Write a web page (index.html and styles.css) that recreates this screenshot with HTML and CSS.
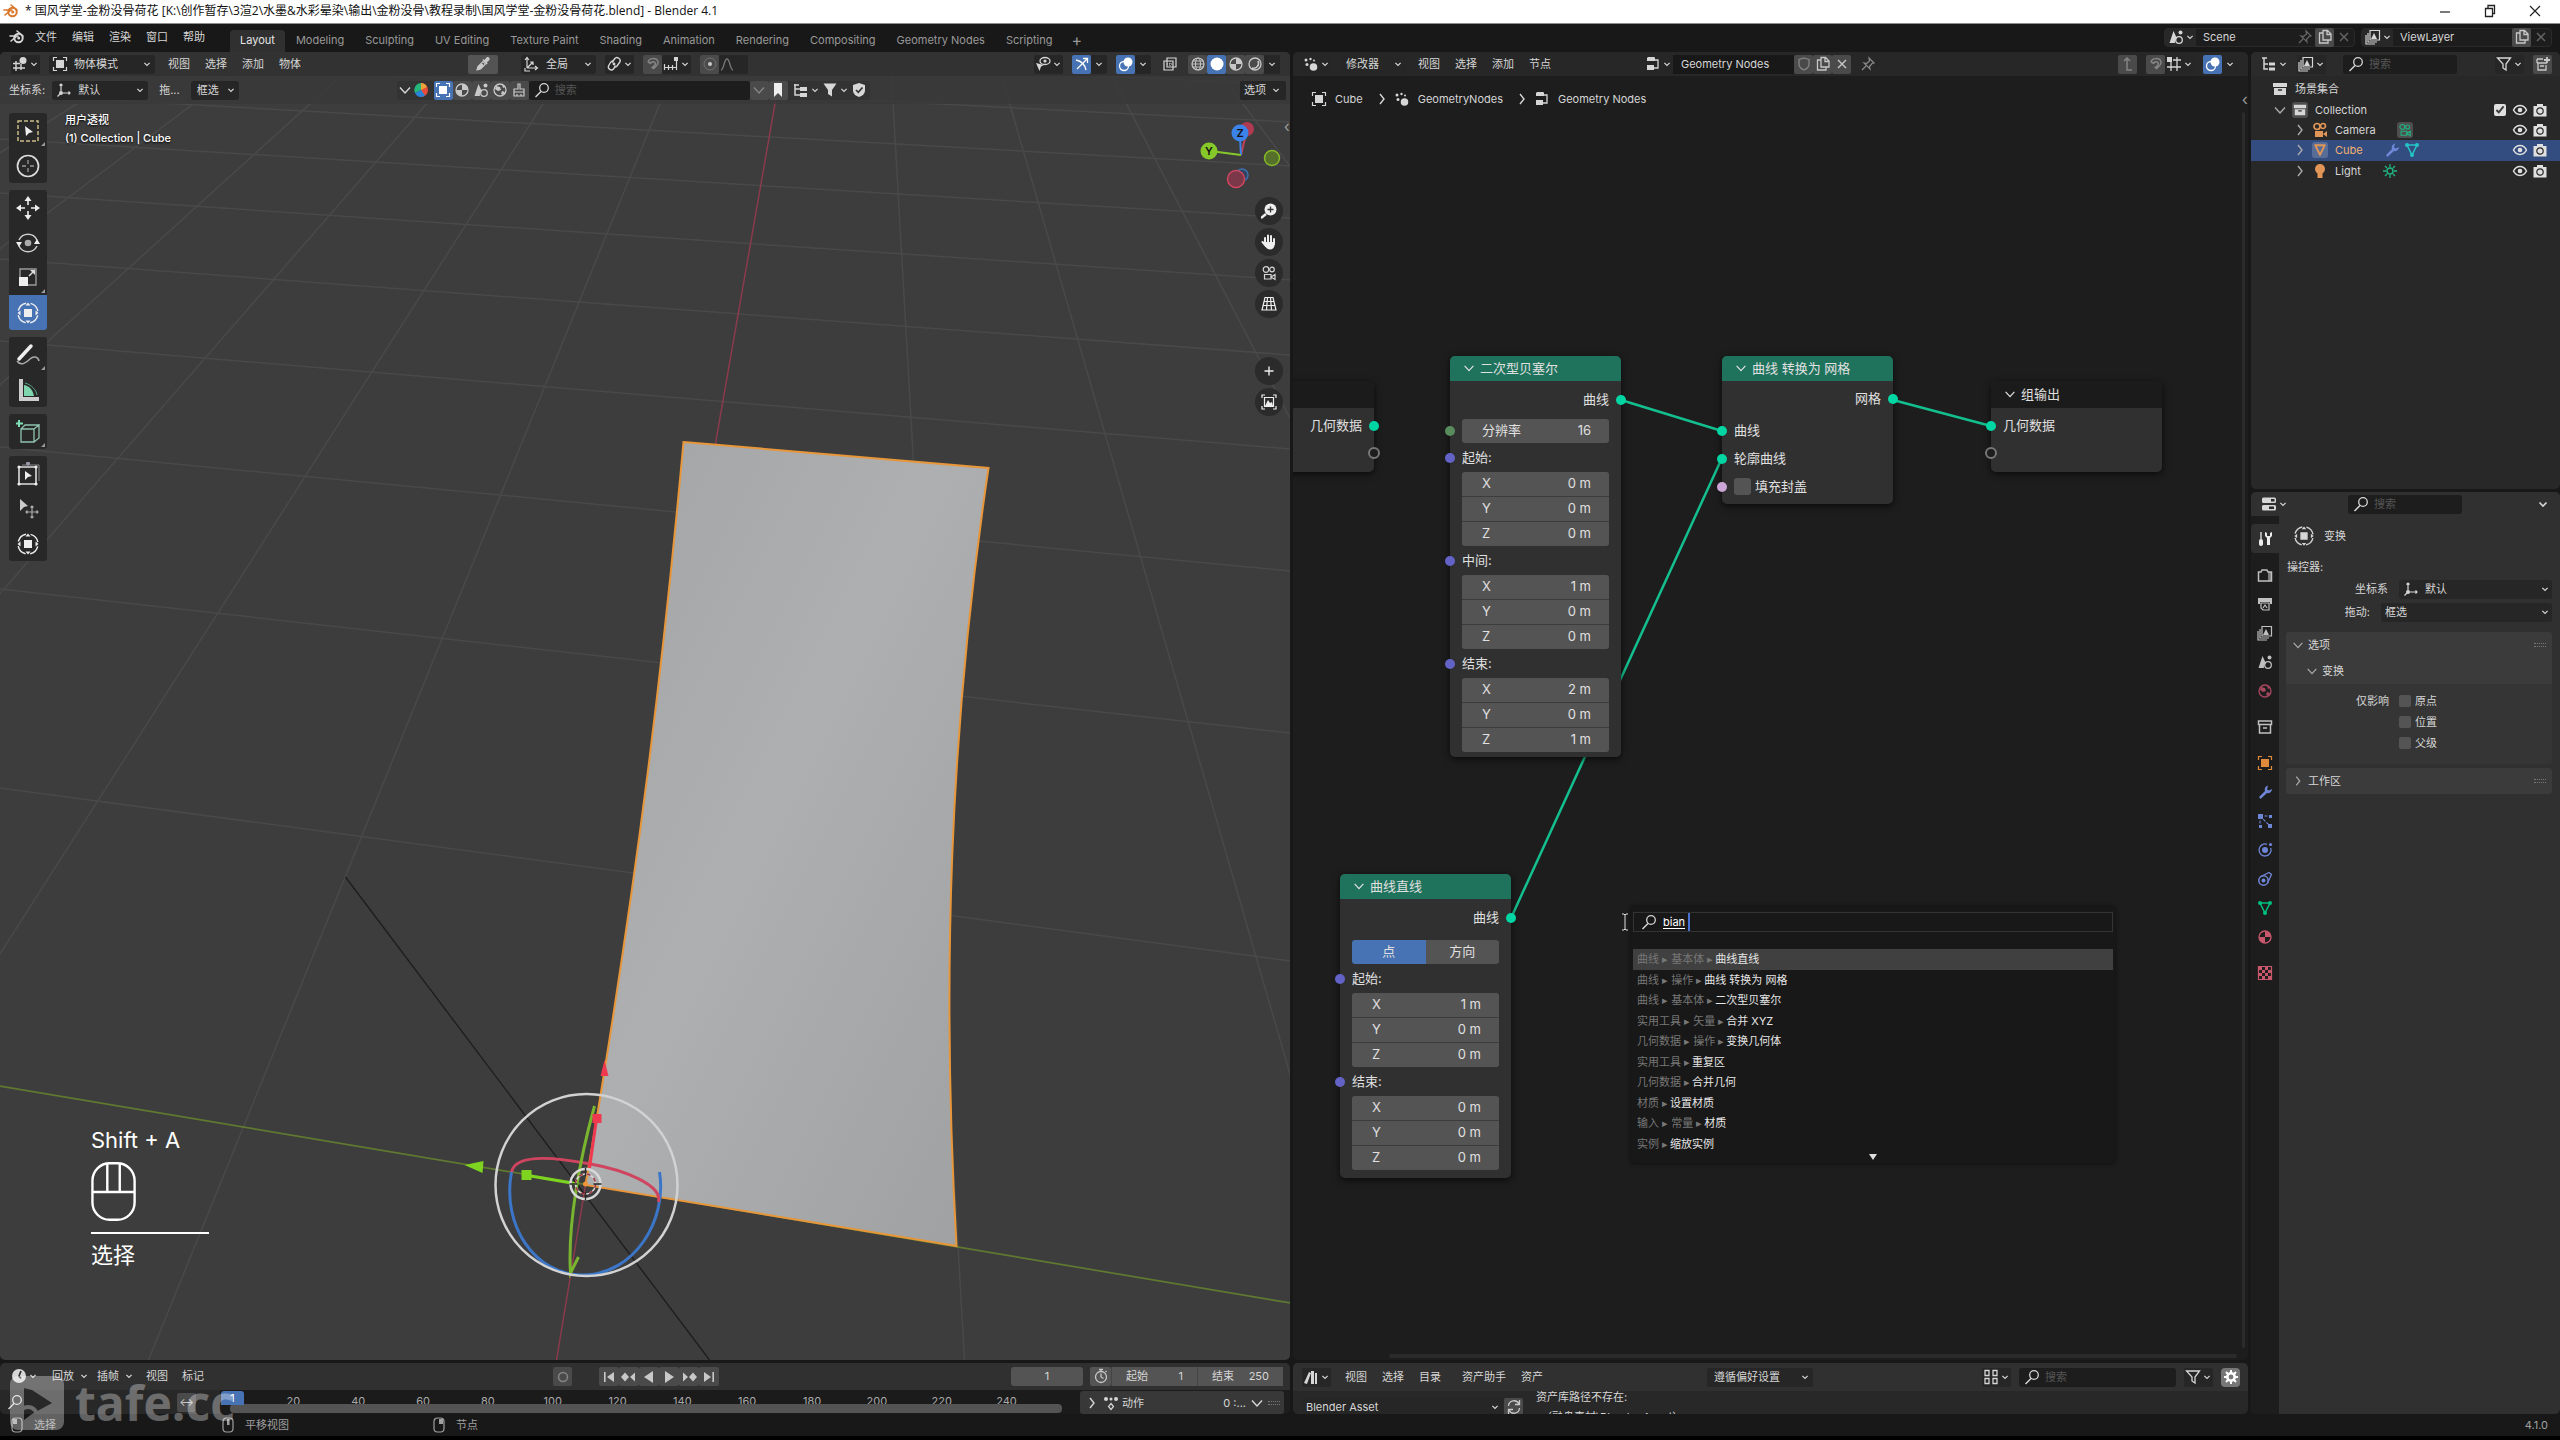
FILE: index.html
```html
<!DOCTYPE html>
<html lang="zh-CN">
<head>
<meta charset="utf-8">
<title>国风学堂-金粉没骨荷花.blend - Blender 4.1</title>
<link rel="stylesheet" href="styles.css">
</head>
<body>
<svg class="sprite" aria-hidden="true">
  <symbol id="chev" viewBox="0 0 16 16"><path d="M4.500 6.500 8 10l3.500-3.500" fill="none" stroke="currentColor" stroke-width="1.600"/></symbol>
  <symbol id="chev-r" viewBox="0 0 16 16"><path d="M6 3l4 5-4 5" fill="none" stroke="currentColor" stroke-width="1.400"/></symbol>
  <symbol id="chev-d" viewBox="0 0 16 16"><path d="M3 5.500 8 11l5-5.500" fill="none" stroke="currentColor" stroke-width="1.400"/></symbol>
  <symbol id="blender" viewBox="0 0 16 16"><path d="M8 2l6 5M1 7h8M2 12l6-5" fill="none" stroke="currentColor" stroke-width="1.600" stroke-linecap="round"/><circle cx="9.500" cy="9" r="4.200" fill="none" stroke="currentColor" stroke-width="2"/><circle cx="9.700" cy="9" r="1.500" fill="currentColor"/></symbol>
  <symbol id="view3d" viewBox="0 0 16 16"><path d="M4 5v10M9 8v6M1 7.500h7M1 12h12" fill="none" stroke="currentColor" stroke-width="1.400"/><circle cx="11" cy="4.500" r="3.500" fill="currentColor"/></symbol>
  <symbol id="object" viewBox="0 0 16 16"><path d="M1.500 5V1.500H5M11 1.500h3.500V5M14.500 11v3.500H11M5 14.500H1.500V11" fill="none" stroke="currentColor" stroke-width="1.200"/><path d="M4 4h8v8H4z" fill="currentColor"/></symbol>
  <symbol id="dropper" viewBox="0 0 16 16"><path d="M2 14l1-3.500L8 5.500l2.500 2.500-5 5z" fill="none" stroke="currentColor" stroke-width="1.200"/><path d="M2 14l1-3.500L6.500 7 9 9.500 5.500 13zM7.500 4l1-1 1 1 2-2.500c2-1.300 4 .7 2.800 2.700L11.700 6.500l1 1-1 1z" fill="currentColor"/></symbol>
  <symbol id="axes" viewBox="0 0 16 16"><path d="M3 12V2M1 4l2-2.500L5 4M3 12h10M11 10l2.500 2L11 14M3 12l6-6M9 9V6H6M6 15H1v-3" fill="none" stroke="currentColor" stroke-width="1.200"/></symbol>
  <symbol id="axes-s" viewBox="0 0 16 16"><path d="M5 9V2M3.500 3.500 5 2l1.500 1.500M7 11h7M12.500 9.500 14 11l-1.500 1.500M1.500 14.500 4 12" fill="none" stroke="currentColor" stroke-width="1.200"/><circle cx="5" cy="11" r="2" fill="currentColor"/></symbol>
  <symbol id="pivot" viewBox="0 0 16 16"><path d="M6 6.500 8.500 3a3 3 0 0 1 5 3.500L11 10a3 3 0 0 1-3 1" fill="none" stroke="currentColor" stroke-width="1.400"/><path d="M9.500 9.500 7.500 13a3 3 0 0 1-5-3L4.500 6.500a3 3 0 0 1 3-1.500" fill="none" stroke="currentColor" stroke-width="1.400"/><circle cx="8" cy="8" r="1.400" fill="currentColor"/></symbol>
  <symbol id="magnet" viewBox="0 0 16 16"><path d="M3 6c1-4 9-5 10 0 .6 3-3 5-5 7M5.500 8c.5-3 4.500-3 5 0-.5 2-2.500 3-4 4M3 6l3 1.500" fill="none" stroke="currentColor" stroke-width="1.500"/></symbol>
  <symbol id="snapinc" viewBox="0 0 16 16"><path d="M1.500 8v6M5.500 9v5M9.500 9v5M13.500 5v9M1.500 11.500h12" fill="none" stroke="currentColor" stroke-width="1.200"/><path d="M11 1h4v4h-4z" fill="currentColor"/></symbol>
  <symbol id="dot" viewBox="0 0 16 16"><circle cx="8" cy="8" r="2" fill="currentColor"/><circle cx="8" cy="8" r="6" fill="none" stroke="currentColor" opacity=".3"/></symbol>
  <symbol id="falloff" viewBox="0 0 16 16"><path d="M2 14c3 0 3-11 6-11s3 11 6 11" fill="none" stroke="currentColor" stroke-width="1.300"/></symbol>
  <symbol id="ball" viewBox="0 0 16 16"><path d="M8 1a7 7 0 0 1 0 14z" fill="#e84b3a"/><path d="M8 1a7 7 0 0 0-6 10l6-3z" fill="#25b67a"/><path d="M8 8l-6 3a7 7 0 0 0 6 4 7 7 0 0 0 4-1.500z" fill="#2b83d8"/><path d="M8 1c3 0 5 2 6 4L8 8z" fill="#e8a33a"/></symbol>
  <symbol id="material" viewBox="0 0 16 16"><circle cx="8" cy="8" r="6" fill="none" stroke="currentColor" stroke-width="1.300"/><path d="M8 2a6 6 0 0 1 6 6H8zM8 8v6a6 6 0 0 1-6-6z" fill="currentColor"/></symbol>
  <symbol id="scene" viewBox="0 0 16 16"><path d="M5.500 2 9 9.500A4 4 0 0 0 7 14H1.500z" fill="currentColor"/><circle cx="11" cy="11" r="3.300" fill="none" stroke="currentColor" stroke-width="1.300"/><circle cx="12.500" cy="3.500" r="2" fill="currentColor"/></symbol>
  <symbol id="world" viewBox="0 0 16 16"><circle cx="8" cy="8" r="6" fill="none" stroke="currentColor" stroke-width="1.300"/><path d="M4 4l4 1 1 3-3 1-3-2zM10 9l3 1-2 3-2-1zM10 2l3 3-2 1z" fill="currentColor"/></symbol>
  <symbol id="brush" viewBox="0 0 16 16"><path d="M7 2h2v5h4v3H3V7h4zM3 10v4h10v-4M6 14v-2M10 14v-2" fill="none" stroke="currentColor" stroke-width="1.200"/></symbol>
  <symbol id="search" viewBox="0 0 16 16"><circle cx="10" cy="6" r="4.300" fill="none" stroke="currentColor" stroke-width="1.300"/><path d="M7 9.500 1.500 15" stroke="currentColor" stroke-width="1.500"/></symbol>
  <symbol id="bookmark" viewBox="0 0 16 16"><path d="M4 1h8v14l-4-4-4 4z" fill="currentColor"/></symbol>
  <symbol id="tree" viewBox="0 0 16 16"><path d="M2 2v11h5M2 7h5M1 3h5" fill="none" stroke="currentColor" stroke-width="1.500"/><path d="M7 5h7v4H7zM7 11h7v4H7z" fill="currentColor"/></symbol>
  <symbol id="funnel" viewBox="0 0 16 16"><path d="M1.500 1.500h13L10 8v6.500L6 12V8z" fill="currentColor"/></symbol>
  <symbol id="funnel-o" viewBox="0 0 16 16"><path d="M1.500 2h13L10 8v6l-3-2V8z" fill="none" stroke="currentColor" stroke-width="1.300"/></symbol>
  <symbol id="shield-f" viewBox="0 0 16 16"><path d="M8 1l6 2v5c0 4-3 6-6 7-3-1-6-3-6-7V3z" fill="currentColor"/><path d="M5 8l2.300 2.300L11.500 5.500" fill="none" stroke="#333" stroke-width="1.700"/></symbol>
  <symbol id="shield" viewBox="0 0 16 16"><path d="M8 2l5 1.500V8c0 3-2.500 5-5 6-2.500-1-5-3-5-6V3.500z" fill="none" stroke="currentColor" stroke-width="1.300"/></symbol>
  <symbol id="vis" viewBox="0 0 16 16"><path d="M1 7l8 2-3 1.500L4.500 15z" fill="currentColor"/><ellipse cx="10" cy="5" rx="5" ry="3.500" fill="none" stroke="currentColor" stroke-width="1.300"/><circle cx="10" cy="5" r="1.600" fill="currentColor"/></symbol>
  <symbol id="gizmo" viewBox="0 0 16 16"><path d="M3 13 13 3M9 2.500h4.500V7M2 4c5 1 9 5 10 10" fill="none" stroke="currentColor" stroke-width="1.300"/></symbol>
  <symbol id="overlay" viewBox="0 0 16 16"><circle cx="10" cy="6" r="4.500" fill="currentColor"/><circle cx="6" cy="10" r="4.500" fill="none" stroke="currentColor" stroke-width="1.300"/></symbol>
  <symbol id="xray" viewBox="0 0 16 16"><path d="M5 2h9v9H5zM2 5h9v9H2z" fill="none" stroke="currentColor" stroke-width="1.200"/><path d="M8 5v6M5 8h6" stroke="currentColor" stroke-dasharray="1 1"/></symbol>
  <symbol id="wire" viewBox="0 0 16 16"><circle cx="8" cy="8" r="6" fill="none" stroke="currentColor" stroke-width="1.200"/><ellipse cx="8" cy="8" rx="2.500" ry="6" fill="none" stroke="currentColor"/><path d="M2 8h12M3 5h10M3 11h10" stroke="currentColor" stroke-width=".9"/></symbol>
  <symbol id="solid" viewBox="0 0 16 16"><circle cx="8" cy="8" r="6.500" fill="currentColor"/></symbol>
  <symbol id="rendered" viewBox="0 0 16 16"><circle cx="8" cy="8" r="6" fill="none" stroke="currentColor" stroke-width="1.300"/><path d="M11 5a5 5 0 0 1-6 7" fill="none" stroke="currentColor" stroke-width="1.600"/></symbol>
  <symbol id="geonodes" viewBox="0 0 16 16"><circle cx="10.500" cy="11" r="3.800" fill="currentColor"/><circle cx="3" cy="4" r="1.500" fill="currentColor"/><circle cx="7.500" cy="3" r="1.200" fill="currentColor"/><circle cx="4" cy="8.500" r="1.500" fill="currentColor"/><circle cx="11" cy="4.500" r="1" fill="currentColor"/></symbol>
  <symbol id="nodetree" viewBox="0 0 16 16"><path d="M3 1h6a1 1 0 0 1 1 1v3H2V2zM2 9h7v5H2z" fill="currentColor"/><path d="M10 4h3v8H9" fill="none" stroke="currentColor" stroke-width="1.300"/></symbol>
  <symbol id="copy" viewBox="0 0 16 16"><path d="M6 1.500h4.500L14 5v6H6zM10 2v3.500h4M6 4H2.500v10H11v-3" fill="none" stroke="currentColor" stroke-width="1.300"/></symbol>
  <symbol id="x" viewBox="0 0 16 16"><path d="M4 4l8 8M12 4l-8 8" stroke="currentColor" stroke-width="1.400"/></symbol>
  <symbol id="pin" viewBox="0 0 16 16"><path d="M9 2l5 5-2 .5-2.500 3 .5 2.500-6-6 2.500.5 3-2.500zM6 10l-4 4" fill="none" stroke="currentColor" stroke-width="1.200"/></symbol>
  <symbol id="up" viewBox="0 0 16 16"><path d="M4 5l3-3 3 3M7 2v12h5" fill="none" stroke="currentColor" stroke-width="1.500"/></symbol>
  <symbol id="snapgrid" viewBox="0 0 16 16"><path d="M5 6v9M11 1v14M7 4h8M1 11h14" fill="none" stroke="currentColor" stroke-width="1.300"/><path d="M1 1h5v5H1z" fill="currentColor"/></symbol>
  <symbol id="images" viewBox="0 0 16 16"><path d="M5 1.500h9.500v9.500H5zM3 4v9h9M1 6v9h9" fill="none" stroke="currentColor" stroke-width="1.200"/><path d="M6 10l3-6 3 6z" fill="currentColor"/></symbol>
  <symbol id="outliner" viewBox="0 0 16 16"><path d="M3 2v11h4M3 8h4M1 2h5" fill="none" stroke="currentColor" stroke-width="1.500"/><path d="M8 6.500h6v3H8zM8 11.500h6v3H8z" fill="currentColor"/></symbol>
  <symbol id="newcol" viewBox="0 0 16 16"><path d="M2 3h6M2 7h10M3 7v7h8V9M2 3v4M5 10h4" fill="none" stroke="currentColor" stroke-width="1.300"/><path d="M12 1v6M9 4h6" stroke="currentColor" stroke-width="1.800"/></symbol>
  <symbol id="box" viewBox="0 0 16 16"><path d="M1 2h14v4H1zM2 7h12v7H2z" fill="currentColor"/><path d="M6 9h4" stroke="#282828" stroke-width="1.600"/></symbol>
  <symbol id="box-o" viewBox="0 0 16 16"><path d="M1.500 2h13v3.500h-13zM2.500 5.500V14h11V5.500M6 9h4" fill="none" stroke="currentColor" stroke-width="1.500"/></symbol>
  <symbol id="cam" viewBox="0 0 16 16"><circle cx="5" cy="4.500" r="3" fill="none" stroke="currentColor" stroke-width="1.700"/><circle cx="11" cy="4" r="2.500" fill="none" stroke="currentColor" stroke-width="1.700"/><path d="M3 9h8v6H3zM11 12l4-3v6z" fill="currentColor"/></symbol>
  <symbol id="cam-d" viewBox="0 0 16 16"><circle cx="5" cy="4.500" r="2.800" fill="none" stroke="currentColor" stroke-width="1.200"/><circle cx="11" cy="4.500" r="2.300" fill="none" stroke="currentColor" stroke-width="1.200"/><path d="M3.500 9.500h6.500v4.500H3.500zM10 12l4-2.500v5z" fill="none" stroke="currentColor" stroke-width="1.200"/></symbol>
  <symbol id="mesh" viewBox="0 0 16 16"><path d="M3 3h10L8 13z" fill="none" stroke="currentColor" stroke-width="1.500"/><circle cx="3" cy="3" r="2" fill="currentColor"/><circle cx="13" cy="3" r="2" fill="currentColor"/><circle cx="8" cy="13" r="2" fill="currentColor"/></symbol>
  <symbol id="tri" viewBox="0 0 16 16"><path d="M2.500 2.500h11L8 13.500z" fill="none" stroke="currentColor" stroke-width="2.200" stroke-linejoin="round"/></symbol>
  <symbol id="wrench" viewBox="0 0 16 16"><path d="M11 1.500a4 4 0 0 0-3 5.500L2 13l1.500 2L10 9a4 4 0 0 0 5-4l-3 1.500-2-1z" fill="currentColor"/></symbol>
  <symbol id="bulb" viewBox="0 0 16 16"><circle cx="8" cy="6" r="5" fill="currentColor"/><path d="M5.500 10h5v5h-5z" fill="currentColor"/></symbol>
  <symbol id="sun" viewBox="0 0 16 16"><circle cx="8" cy="8" r="3" fill="none" stroke="currentColor" stroke-width="1.500"/><path d="M8 1v3M8 12v3M1 8h3M12 8h3M3 3l2 2M11 11l2 2M13 3l-2 2M5 11l-2 2" stroke="currentColor" stroke-width="1.300"/></symbol>
  <symbol id="eye" viewBox="0 0 16 16"><path d="M1.500 8c3-6 10-6 13 0-3 6-10 6-13 0z" fill="none" stroke="currentColor" stroke-width="1.500"/><circle cx="8" cy="8" r="2.300" fill="currentColor"/></symbol>
  <symbol id="photo" viewBox="0 0 16 16"><path d="M1.500 4H5V2h6v2h3.500v10.500h-13z" fill="currentColor"/><circle cx="8" cy="9" r="3.200" fill="none" stroke="#282828" stroke-width="1.200"/></symbol>
  <symbol id="props" viewBox="0 0 16 16"><rect x="1" y="1.500" width="14" height="5.500" rx="1.500" fill="currentColor"/><rect x="1" y="9" width="14" height="5.500" rx="1.500" fill="currentColor"/><path d="M10 3h3.500v2.500H10zM8 10.500h5V13H8z" fill="#282828"/></symbol>
  <symbol id="tool" viewBox="0 0 16 16"><path d="M4 1v7" stroke="currentColor" stroke-width="1.300"/><rect x="2" y="8" width="4" height="7" rx="2" fill="currentColor"/><path d="M8 1v4l2 2v7h3V7l2-2V1l-2 1v3h-3V2z" fill="currentColor"/></symbol>
  <symbol id="render" viewBox="0 0 16 16"><path d="M1.500 5H4l1-2h5l1 2h3.500v9h-13z" fill="none" stroke="currentColor" stroke-width="1.500"/><path d="M11 5h3v9h-3z" fill="currentColor" opacity=".6"/></symbol>
  <symbol id="printer" viewBox="0 0 16 16"><path d="M1 2h14v6h-2V6H3v2H1z" fill="currentColor"/><path d="M4 7h8v7H6l-2-2zM6 12l2-3 2 3" fill="none" stroke="currentColor" stroke-width="1.200"/></symbol>
  <symbol id="particles" viewBox="0 0 16 16"><path d="M3 3h10M3 3v11M3 3l10 10" stroke="currentColor" stroke-width="1.100" stroke-dasharray="3 1.500"/><path d="M1 1h5v5H1zM12 2h3v3h-3zM11 11h4v4h-4zM2 12h3v3H2z" fill="currentColor"/></symbol>
  <symbol id="physics" viewBox="0 0 16 16"><path d="M10 2.300A6 6 0 1 0 13.700 6" fill="none" stroke="currentColor" stroke-width="1.300"/><circle cx="8" cy="8" r="3" fill="currentColor"/><circle cx="13.500" cy="2.500" r="1.600" fill="currentColor"/></symbol>
  <symbol id="constraint" viewBox="0 0 16 16"><circle cx="6.500" cy="9.500" r="4.700" fill="none" stroke="currentColor" stroke-width="1.500"/><circle cx="6.500" cy="9.500" r="2" fill="currentColor"/><path d="M3 6l9-4.500 2.500 2L10.500 12" fill="none" stroke="currentColor" stroke-width="1.300"/></symbol>
  <symbol id="checker" viewBox="0 0 16 16"><path d="M1.500 1.500h13v13h-13z" fill="none" stroke="currentColor" stroke-width="1.200"/><path d="M2 2h3v3H2zM8 2h3v3H8zM5 5h3v3H5zM11 5h3v3h-3zM2 8h3v3H2zM8 8h3v3H8zM5 11h3v3H5zM11 11h3v3h-3z" fill="currentColor"/></symbol>
  <symbol id="transform" viewBox="0 0 24 24"><circle cx="12" cy="12" r="10" fill="none" stroke="currentColor" stroke-width="1.500" stroke-dasharray="11 4.700" stroke-dashoffset="-2.400"/><path d="M8 8h8v8H8zM9.500 4.500 12 1.500l2.500 3zM9.500 19.500l2.500 3 2.500-3zM4.500 9.500l-3 2.500 3 2.500zM19.500 9.500l3 2.500-3 2.500z" fill="currentColor"/></symbol>
  <symbol id="clock" viewBox="0 0 16 16"><circle cx="8" cy="8" r="7" fill="currentColor"/><path d="M10 3 8 8l2 2.500" fill="none" stroke="#303030" stroke-width="1.700"/></symbol>
  <symbol id="stopwatch" viewBox="0 0 16 16"><circle cx="8" cy="9" r="5.500" fill="none" stroke="currentColor" stroke-width="1.300"/><path d="M8 5.500V9l2.500 1.500M6 1.500h4M8 1.500V4M12.500 4l1-1" fill="none" stroke="currentColor" stroke-width="1.300"/></symbol>
  <symbol id="rec" viewBox="0 0 16 16"><circle cx="8" cy="8" r="4.500" fill="none" stroke="currentColor" stroke-width="1.500"/></symbol>
  <symbol id="first" viewBox="0 0 16 16"><path d="M3 3h1.600v10H3zM13 3v10L6 8z" fill="currentColor"/></symbol>
  <symbol id="prevkey" viewBox="0 0 16 16"><path d="M0 8l4-4.500L8 8l-4 4.500zM14 3.500v9L9 8z" fill="currentColor"/></symbol>
  <symbol id="play" viewBox="0 0 16 16"><path d="M4 2v12l9-6z" fill="currentColor"/></symbol>
  <symbol id="assets" viewBox="0 0 16 16"><path d="M1 14 6 3l2 1-4 11zM8 2h3v13H8zM12 4h2v11h-2z" fill="currentColor"/></symbol>
  <symbol id="display" viewBox="0 0 16 16"><path d="M2 1.500h4v5H2zM10 1.500h4v5h-4zM2 9.500h4v5H2zM10 9.500h4v5h-4z" fill="none" stroke="currentColor" stroke-width="1.300"/></symbol>
  <symbol id="gear" viewBox="0 0 16 16"><circle cx="8" cy="8" r="3.700" fill="none" stroke="currentColor" stroke-width="2.600"/><path d="M8 1v3M8 12v3M1 8h3M12 8h3M3 3l2 2M11 11l2 2M13 3l-2 2M5 11l-2 2" stroke="currentColor" stroke-width="2"/></symbol>
  <symbol id="refresh" viewBox="0 0 16 16"><path d="M2.500 7A5.500 5.500 0 0 1 13 5M13.500 1v4.500H9M13.500 9A5.500 5.500 0 0 1 3 11M2.500 15v-4.500H7" fill="none" stroke="currentColor" stroke-width="1.300"/></symbol>
  <symbol id="action" viewBox="0 0 16 16"><circle cx="3" cy="4" r="2" fill="currentColor"/><circle cx="8" cy="4" r="1.500" fill="currentColor"/><circle cx="13" cy="4" r="2" fill="currentColor"/><path d="M8 8.500l2.500 3L8 14.500l-2.500-3z" fill="none" stroke="currentColor" stroke-width="1.200"/></symbol>
  <symbol id="mouse-l" viewBox="0 0 16 16"><rect x="3" y="1" width="10" height="14" rx="3.500" fill="none" stroke="currentColor" stroke-width="1.200"/><path d="M4 2h4v5H4z" fill="currentColor"/></symbol>
  <symbol id="mouse-m" viewBox="0 0 16 16"><rect x="3" y="1" width="10" height="14" rx="3.500" fill="none" stroke="currentColor" stroke-width="1.200"/><path d="M7 2h2.500v6H7z" fill="currentColor"/></symbol>
  <symbol id="mouse-r" viewBox="0 0 16 16"><rect x="3" y="1" width="10" height="14" rx="3.500" fill="none" stroke="currentColor" stroke-width="1.200"/><path d="M8 2h4v5H8z" fill="currentColor"/></symbol>
</svg>

<header class="titlebar">
  <svg class="i logo"><use href="#blender"/></svg>
  <h1>* 国风学堂-金粉没骨荷花 [K:\创作暂存\3渲2\水墨&amp;水彩晕染\输出\金粉没骨\教程录制\国风学堂-金粉没骨荷花.blend] - Blender 4.1</h1>
  <div class="winbtns">
    <button aria-label="最小化"><svg class="i"><path d="M3 9h10" stroke="#222" stroke-width="1.200"/></svg></button>
    <button aria-label="还原"><svg class="i"><path d="M3.500 5.500h7v8h-7zM6 5V2.500h6.500v8H11" fill="none" stroke="#222" stroke-width="1.300"/></svg></button>
    <button aria-label="关闭"><svg class="i"><path d="M3 3l10 10M13 3 3 13" stroke="#222" stroke-width="1.200"/></svg></button>
  </div>
</header>

<nav class="topbar">
  <svg class="i"><use href="#blender"/></svg>
  <div class="menu"><button>文件</button><button>编辑</button><button>渲染</button><button>窗口</button><button>帮助</button></div>
  <div class="tabs"><button class="on">Layout</button><button>Modeling</button><button>Sculpting</button><button>UV Editing</button><button>Texture Paint</button><button>Shading</button><button>Animation</button><button>Rendering</button><button>Compositing</button><button>Geometry Nodes</button><button>Scripting</button><button class="add">+</button></div>
  <div class="idblock">
    <button class="pick"><svg class="i"><use href="#scene"/></svg><svg class="c"><use href="#chev"/></svg></button>
    <input value="Scene" aria-label="场景"><button class="ghost"><svg class="i"><use href="#pin"/></svg></button><button class="b grey"><svg class="i"><use href="#copy"/></svg></button><button class="ghost"><svg class="i"><use href="#x"/></svg></button>
  </div>
  <div class="idblock layer">
    <button class="pick"><svg class="i"><use href="#images"/></svg><svg class="c"><use href="#chev"/></svg></button>
    <input value="ViewLayer" aria-label="视图层"><button class="b grey"><svg class="i"><use href="#copy"/></svg></button><button class="ghost"><svg class="i"><use href="#x"/></svg></button>
  </div>
</nav>

<main class="workspace">
<section class="col">
  <div class="area viewport">
    <svg class="scene3d" viewBox="0 52 1291 1308" preserveAspectRatio="xMidYMid slice">
      <defs><linearGradient id="sheet" x1="0" y1="0" x2="1" y2="1"><stop offset="0" stop-color="#a2a4a5"/><stop offset=".45" stop-color="#adafb0"/><stop offset="1" stop-color="#9ea0a1"/></linearGradient></defs>
      <g stroke="#494949" stroke-width="1.500">
        <path d="M865-399-3115 1360M865-399-2707 1360M865-399-2299 1360M865-399-1891 1360M865-399-1483 1360M865-399-1075 1360M865-399-667 1360M865-399-259 1360M865-399 149 1360M865-399 965 1360M865-399 1373 1360M865-399 1781 1360M865-399 2189 1360M865-399 2597 1360M865-399 3005 1360M865-399 3413 1360M865-399 3821 1360"/>
        <path d="M0 788 1291 961M0 589 1291 733M0 447 1291 571M0 341 1291 449M0 259 1291 355M0 193 1291 280M0 139 1291 218M0 94 1291 166M0 56 1291 122M0 23 1291 85"/>
      </g>
      <path d="M776 101 586 1185 557 1360" stroke="#8a3b4b" stroke-width="1.500" fill="none"/>
      <path d="M0 1086 1291 1303" stroke="#5f7a30" stroke-width="1.700"/>
      <path d="M346 877 710 1360" stroke="#1d1d1d" stroke-width="1.300"/>
      <path d="M684 442 989 468C950 730 942 980 957 1246L586 1185C640 870 665 650 684 442z" fill="url(#sheet)" stroke="#e8963a" stroke-width="2"/>
      <g fill="none" stroke-width="3">
        <path d="M512 1172C502 1225 535 1275 583 1275C635 1275 668 1220 660 1172" stroke="#3b76c8"/>
        <path d="M512 1172C516 1152 560 1158 591 1164C625 1170 663 1185 659 1202" stroke="#cf4560"/>
        <path d="M595 1106C580 1160 568 1225 571 1273L579 1257" stroke="#79b52f"/>
        <path d="M531 1176 578 1184" stroke="#7ed321"/>
        <path d="M597 1119 590 1168" stroke="#f0384f"/>
        <circle cx="587" cy="1185" r="91" stroke="#d2d2d2" stroke-width="2.500"/>
        <circle cx="586" cy="1184" r="15" stroke="#d8d8d8" stroke-width="2.500"/>
        <circle cx="586" cy="1184" r="10" stroke="#d8d8d8" stroke-width="1.500"/>
        <circle cx="586" cy="1184" r="10" stroke="#a03040" stroke-width="1.500" stroke-dasharray="4 4"/>
        <path d="M586 1168v8M586 1192v8M570 1184h8M594 1184h8" stroke="#2a2a2a" stroke-width="1.300"/>
      </g>
      <path d="M465 1165 484 1161 483 1173zM522 1170h10v10h-10z" fill="#7ed321"/>
      <path d="M605 1060 609 1076H601zM593 1114h9v9h-9z" fill="#f0384f"/>
      <circle cx="586" cy="1184" r="2.500" fill="#f0963a"/>
    </svg>
    <div class="hrow solid">
      <button class="b dark ed"><svg class="i"><use href="#view3d"/></svg><svg class="c"><use href="#chev"/></svg></button>
      <label class="dd mode"><svg class="i"><use href="#object"/></svg><select aria-label="模式"><option>物体模式</option></select><svg class="c"><use href="#chev"/></svg></label>
      <div class="menu"><button>视图</button><button>选择</button><button>添加</button><button>物体</button></div>
      <div class="mid">
        <button class="b grey wide"><svg class="i"><use href="#dropper"/></svg></button>
        <label class="dd orient"><svg class="i"><use href="#axes"/></svg><select aria-label="坐标系"><option>全局</option></select><svg class="c"><use href="#chev"/></svg></label>
        <button class="b dark ed"><svg class="i"><use href="#pivot"/></svg><svg class="c"><use href="#chev"/></svg></button>
        <div class="join"><button class="b grey dim"><svg class="i"><use href="#magnet"/></svg></button><button class="b dark ed"><svg class="i"><use href="#snapinc"/></svg><svg class="c"><use href="#chev"/></svg></button></div>
        <div class="join"><button class="b grey"><svg class="i"><use href="#dot"/></svg></button><button class="b dark ed off"><svg class="i"><use href="#falloff"/></svg></button></div>
      </div>
      <div class="end">
        <button class="b dark ed"><svg class="i"><use href="#vis"/></svg><svg class="c"><use href="#chev"/></svg></button>
        <div class="join"><button class="b blue"><svg class="i"><use href="#gizmo"/></svg></button><button class="b dark"><svg class="c"><use href="#chev"/></svg></button></div>
        <div class="join"><button class="b blue"><svg class="i"><use href="#overlay"/></svg></button><button class="b dark"><svg class="c"><use href="#chev"/></svg></button></div>
        <button class="b"><svg class="i"><use href="#xray"/></svg></button>
        <div class="join"><button class="b grey"><svg class="i"><use href="#wire"/></svg></button><button class="b blue"><svg class="i"><use href="#solid"/></svg></button><button class="b grey"><svg class="i"><use href="#material"/></svg></button><button class="b grey"><svg class="i"><use href="#rendered"/></svg></button><button class="b dark"><svg class="c"><use href="#chev"/></svg></button></div>
      </div>
    </div>
    <div class="hrow tools">
      <label class="pair">坐标系:<span class="dd dflt"><svg class="i"><use href="#axes-s"/></svg><select><option>默认</option></select><svg class="c"><use href="#chev"/></svg></span></label>
      <label class="pair">拖...<span class="dd drag"><select><option>框选</option></select><svg class="c"><use href="#chev"/></svg></span></label>
      <div class="filters">
        <svg class="i"><use href="#chev-d"/></svg><svg class="i"><use href="#ball"/></svg>
        <div class="join"><button class="b blue"><svg class="i"><use href="#object"/></svg></button><button class="b grey"><svg class="i"><use href="#material"/></svg></button><button class="b grey"><svg class="i"><use href="#scene"/></svg></button><button class="b grey"><svg class="i"><use href="#world"/></svg></button><button class="b grey"><svg class="i"><use href="#brush"/></svg></button><label class="find vfind"><svg class="i"><use href="#search"/></svg><input placeholder="搜索" aria-label="搜索"></label><button class="b grey dim"><svg class="i"><use href="#chev-d"/></svg></button><button class="b grey"><svg class="i white"><use href="#bookmark"/></svg></button></div>
        <button class="b ed"><svg class="i"><use href="#tree"/></svg><svg class="c"><use href="#chev"/></svg></button>
        <button class="b ed"><svg class="i"><use href="#funnel"/></svg><svg class="c"><use href="#chev"/></svg></button>
        <svg class="i"><use href="#shield-f"/></svg>
      </div>
      <button class="b dark opts">选项<svg class="c"><use href="#chev"/></svg></button>
    </div>

    <div class="toolbar">
      <div class="tgroup">
        <button class="more"><svg viewBox="0 0 24 24"><path d="M2 2h20v20H2z" fill="none" stroke="#c9b98a" stroke-width="1.500" stroke-dasharray="4 2"/><path d="M9 7l8 6-4 1-3 3z" fill="#eee"/></svg></button>
        <button><svg viewBox="0 0 24 24"><circle cx="12" cy="12" r="10.500" fill="none" stroke="#ddd" stroke-width="1.700"/><path d="M12 6v4M12 14v4M6 12h4M14 12h4" stroke="#999" stroke-width="1.300"/></svg></button>
      </div>
      <div class="tgroup">
        <button><svg viewBox="0 0 24 24"><path d="M12 0l3.500 5h-7zM12 24l3.500-5h-7zM0 12l5-3.500v7zM24 12l-5-3.500v7z" fill="#eee"/><path d="M12 5v4M12 15v4M5 12h4M15 12h4" stroke="#eee" stroke-width="1.600"/></svg></button>
        <button><svg viewBox="0 0 24 24"><path d="M3 9a10 10 0 0 1 18 0M21 15a10 10 0 0 1-18 0" fill="none" stroke="#ccc" stroke-width="1.500"/><circle cx="12" cy="12" r="3.300" fill="#aaa"/><path d="M0 11h6l-3 5zM18 13h6l-3-5z" fill="#eee"/></svg></button>
        <button class="more"><svg viewBox="0 0 24 24"><path d="M4 3h16v16H4z" fill="none" stroke="#999" stroke-width="1.400"/><path d="M3 11h9v9H3z" fill="#eee"/><path d="M13 10l4-4" stroke="#ddd" stroke-width="1.500"/><path d="M19 4v5l-5-5z" fill="#ddd"/></svg></button>
        <button class="on"><svg viewBox="0 0 24 24"><use href="#transform"/></svg></button>
      </div>
      <div class="tgroup">
        <button class="more"><svg viewBox="0 0 24 24"><path d="M3 16 15 3" stroke="#eee" stroke-width="3.500" stroke-linecap="round"/><path d="M1 18c4 6 10 1 13-2s8-3 9 2" fill="none" stroke="#aaa" stroke-width="1.500"/></svg></button>
        <button><svg viewBox="0 0 24 24"><path d="M3 1h4v18h16v4H3z" fill="#ccc"/><path d="M8 7c6 1 9 6 10 11H8z" fill="#7fd6ae"/><path d="M9 5c7 2 11 7 12 12" fill="none" stroke="#56a887"/></svg></button>
      </div>
      <div class="tgroup">
        <button class="more"><svg viewBox="0 0 24 24"><path d="M5 9h13v13H5zM5 9l4-4h14l-5 4M18 22l5-4V5" fill="none" stroke="#8fc3ae" stroke-width="1.300"/><path d="M3 0v7M0 3.500h7" stroke="#7fe0b5" stroke-width="2"/></svg></button>
      </div>
      <div class="tgroup">
        <button><svg viewBox="0 0 24 24"><path d="M3 5h17v17H3z" fill="none" stroke="#ddd" stroke-width="1.600"/><path d="M6 3h17v16" fill="none" stroke="#888"/><path d="M9 9l7 5-4 1-3 3z" fill="#eee"/><circle cx="3" cy="5" r="1.600" fill="#eee"/><circle cx="20" cy="5" r="1.600" fill="#eee"/><circle cx="3" cy="22" r="1.600" fill="#eee"/><circle cx="20" cy="22" r="1.600" fill="#eee"/><circle cx="12" cy="1.500" r="2" fill="#99a"/></svg></button>
        <button><svg viewBox="0 0 24 24"><path d="M4 2l8 7-4 1-4 4z" fill="#ccc"/><path d="M16 9v12M10 15h12M14.500 10.500 16 9l1.500 1.500M14.500 19.500 16 21l1.500-1.500M11.500 13.500 10 15l1.500 1.500M20.500 13.500 22 15l-1.500 1.500" fill="none" stroke="#aaa" stroke-width="1.200"/></svg></button>
        <button><svg viewBox="0 0 24 24"><use href="#transform"/></svg></button>
      </div>
    </div>

    <div class="vinfo"><div>用户透视</div><div>(1) Collection | Cube</div></div>

    <svg class="orbit" viewBox="1195 115 90 80">
      <circle cx="1247" cy="129" r="7" fill="#b03a52"/><path d="M1241 155 1246 134" stroke="#c0405a" stroke-width="2"/>
      <path d="M1241 155 1240 138" stroke="#3b83e8" stroke-width="2"/><path d="M1241 155 1210 151" stroke="#86c82a" stroke-width="2"/>
      <circle cx="1242" cy="175" r="6" fill="#2f4460" stroke="#3f6fae" stroke-width="1.500"/>
      <circle cx="1240" cy="133" r="8.500" fill="#3b83e8"/><text x="1240" y="137">Z</text>
      <circle cx="1209" cy="151" r="8.500" fill="#86c82a"/><text x="1209" y="155">Y</text>
      <circle cx="1272" cy="158" r="7.500" fill="#55702a" stroke="#86b82a" stroke-width="1.500"/>
      <circle cx="1236" cy="179" r="8.500" fill="#7a3848" stroke="#d04560" stroke-width="1.500"/>
    </svg>
    <div class="navbtns">
      <button><svg class="i"><circle cx="9.500" cy="6.500" r="6" fill="#eee"/><path d="M5 11l-5 4" stroke="#eee" stroke-width="2.500"/><path d="M9.500 3.500v6M6.500 6.500h6" stroke="#333" stroke-width="1.300"/></svg></button>
      <button><svg class="i"><path d="M4 10V4M7 9V1.500M10 9V2M13 10V5M1.500 8 5 12" stroke="#eee" stroke-width="2" stroke-linecap="round"/><path d="M3 8h11c0 5-2 7.500-5 7.500S3 12 3 8z" fill="#eee"/></svg></button>
      <button><svg class="i"><use href="#cam-d"/></svg></button>
      <button><svg class="i"><path d="M4 1.500h8L15 14H1zM2.500 9.500h11M3.200 5.500h9.600M6.500 1.500 5.500 14M9.500 1.500l1 12.500" fill="none" stroke="#eee" stroke-width="1.200"/></svg></button>
      <button class="sep"><svg class="i"><path d="M8 3.500v9M3.500 8h9" stroke="#eee" stroke-width="1.400"/></svg></button>
      <button><svg class="i"><path d="M1 4V1h3M12 1h3v3M15 12v3h-3M4 15H1v-3M3.500 3.500h9v9h-9z" fill="none" stroke="#eee" stroke-width="1.200"/><path d="M4 12l3-6 2 3 2-1 1 4z" fill="#eee"/></svg></button>
    </div>
    <span class="flap">‹</span>

    <div class="keys">
      <div>Shift + A</div>
      <svg viewBox="0 0 48 64"><rect x="1.500" y="2" width="44" height="59" rx="18" fill="none" stroke="#fff" stroke-width="2.500"/><path d="M1.500 32h44M17 2v30M30 2v30" stroke="#fff" stroke-width="2.500"/></svg>
      <hr>
      <div>选择</div>
    </div>
  </div>

  <div class="area timeline">
    <div class="hrow">
      <button class="b ed"><svg class="i"><use href="#clock"/></svg><svg class="c"><use href="#chev"/></svg></button>
      <div class="menu tl"><button>回放<svg class="c"><use href="#chev"/></svg></button><button>插帧<svg class="c"><use href="#chev"/></svg></button><button>视图</button><button>标记</button></div>
      <div class="play">
        <button class="b grey dim"><svg class="i"><use href="#rec"/></svg></button>
        <div class="join"><button class="b grey"><svg class="i"><use href="#first"/></svg></button><button class="b grey"><svg class="i"><use href="#prevkey"/></svg></button><button class="b grey"><svg class="i flip"><use href="#play"/></svg></button><button class="b grey"><svg class="i"><use href="#play"/></svg></button><button class="b grey"><svg class="i flip"><use href="#prevkey"/></svg></button><button class="b grey"><svg class="i flip"><use href="#first"/></svg></button></div>
      </div>
      <div class="frames">
        <input class="cur" value="1" aria-label="当前帧">
        <button class="b grey"><svg class="i"><use href="#stopwatch"/></svg></button>
        <label>起始<input value="1"></label><label>结束<input value="250"></label>
      </div>
    </div>
    <div class="trow">
      <div class="chan"><svg class="i"><use href="#search"/></svg><button class="b grey">↔</button></div>
      <div class="ruler"><div class="ticks"><span>20</span><span>40</span><span>60</span><span>80</span><span>100</span><span>120</span><span>140</span><span>160</span><span>180</span><span>200</span><span>220</span><span>240</span></div><div class="scroll"></div><div class="head">1</div></div>
      <div class="action"><svg class="i"><use href="#chev-r"/></svg><svg class="i"><use href="#action"/></svg><span>动作</span><span class="val">0 :...</span><svg class="i"><use href="#chev-d"/></svg><span class="grip"></span></div>
    </div>
  </div>
</section>

<section class="col">
  <div class="area nodes">
    <div class="hrow">
      <button class="b dark ed"><svg class="i"><use href="#geonodes"/></svg><svg class="c"><use href="#chev"/></svg></button>
      <label class="dd mod"><select aria-label="类型"><option>修改器</option></select><svg class="c"><use href="#chev"/></svg></label>
      <div class="menu"><button>视图</button><button>选择</button><button>添加</button><button>节点</button></div>
      <div class="tree"><button class="b dark ed"><svg class="i"><use href="#nodetree"/></svg><svg class="c"><use href="#chev"/></svg></button><input value="Geometry Nodes" aria-label="节点树"><button class="b grey dim"><svg class="i"><use href="#shield"/></svg></button><button class="b grey"><svg class="i"><use href="#copy"/></svg></button><button class="b grey"><svg class="i"><use href="#x"/></svg></button><button class="ghost"><svg class="i"><use href="#pin"/></svg></button></div>
      <div class="end">
        <button class="b grey dim"><svg class="i"><use href="#up"/></svg></button>
        <div class="join"><button class="b grey dim"><svg class="i"><use href="#magnet"/></svg></button><button class="b dark ed"><svg class="i"><use href="#snapgrid"/></svg><svg class="c"><use href="#chev"/></svg></button></div>
        <div class="join"><button class="b blue"><svg class="i"><use href="#overlay"/></svg></button><button class="b dark"><svg class="c"><use href="#chev"/></svg></button></div>
      </div>
    </div>
    <div class="crumbs"><svg class="i"><use href="#object"/></svg><span>Cube</span><svg class="i sepc"><use href="#chev-r"/></svg><svg class="i"><use href="#geonodes"/></svg><span>GeometryNodes</span><svg class="i sepc"><use href="#chev-r"/></svg><svg class="i"><use href="#nodetree"/></svg><span>Geometry Nodes</span></div>
    <span class="flap">‹</span>

    <svg class="links"><g transform="translate(-1293 -52)" fill="none" stroke="#14bf8f" stroke-width="2.500"><path d="M1621 400 1722 431M1893 400 1991 426M1511 918 1722 458"/></g></svg>

    <article class="node io gin">
      <h2>&nbsp;</h2>
      <div class="row out">几何数据<i class="sock r geo"></i></div>
      <div class="row"><i class="sock r hollow"></i></div>
    </article>

    <article class="node bez">
      <h2><svg class="i"><use href="#chev-d"/></svg>二次型贝塞尔</h2>
      <div class="row out top">曲线<i class="sock r geo"></i></div>
      <label class="num one"><i class="sock int"></i><span>分辨率</span><input value="16"></label>
      <div class="row vec">起始:<i class="sock vecs"></i></div>
      <div class="nums"><label class="num"><span>X</span><input value="0 m"></label><label class="num"><span>Y</span><input value="0 m"></label><label class="num"><span>Z</span><input value="0 m"></label></div>
      <div class="row vec">中间:<i class="sock vecs"></i></div>
      <div class="nums"><label class="num"><span>X</span><input value="1 m"></label><label class="num"><span>Y</span><input value="0 m"></label><label class="num"><span>Z</span><input value="0 m"></label></div>
      <div class="row vec">结束:<i class="sock vecs"></i></div>
      <div class="nums"><label class="num"><span>X</span><input value="2 m"></label><label class="num"><span>Y</span><input value="0 m"></label><label class="num"><span>Z</span><input value="1 m"></label></div>
    </article>

    <article class="node c2m">
      <h2><svg class="i"><use href="#chev-d"/></svg>曲线 转换为 网格</h2>
      <div class="row out top">网格<i class="sock r geo"></i></div>
      <div class="row">曲线<i class="sock geo"></i></div>
      <div class="row">轮廓曲线<i class="sock geo"></i></div>
      <label class="row"><input type="checkbox">填充封盖<i class="sock bool"></i></label>
    </article>

    <article class="node io gout">
      <h2><svg class="i"><use href="#chev-d"/></svg>组输出</h2>
      <div class="row">几何数据<i class="sock geo"></i></div>
      <div class="row"><i class="sock hollow"></i></div>
    </article>

    <article class="node line">
      <h2><svg class="i"><use href="#chev-d"/></svg>曲线直线</h2>
      <div class="row out top">曲线<i class="sock r geo"></i></div>
      <div class="toggle"><button class="on">点</button><button>方向</button></div>
      <div class="row vec">起始:<i class="sock vecs"></i></div>
      <div class="nums"><label class="num"><span>X</span><input value="1 m"></label><label class="num"><span>Y</span><input value="0 m"></label><label class="num"><span>Z</span><input value="0 m"></label></div>
      <div class="row vec">结束:<i class="sock vecs"></i></div>
      <div class="nums"><label class="num"><span>X</span><input value="0 m"></label><label class="num"><span>Y</span><input value="0 m"></label><label class="num"><span>Z</span><input value="0 m"></label></div>
    </article>

    <div class="popup">
      <svg class="ibeam" viewBox="0 0 8 18"><path d="M1 1h2l1 1 1-1h2M4 2v14M1 17h2l1-1 1 1h2" fill="none" stroke="#ddd"/></svg>
      <label class="psearch"><svg class="i"><use href="#search"/></svg><input value="bian" aria-label="搜索节点"></label>
      <ul>
        <li class="on"><span>曲线 ▸ 基本体 ▸</span> 曲线直线</li>
        <li><span>曲线 ▸ 操作 ▸</span> 曲线 转换为 网格</li>
        <li><span>曲线 ▸ 基本体 ▸</span> 二次型贝塞尔</li>
        <li><span>实用工具 ▸ 矢量 ▸</span> 合并 XYZ</li>
        <li><span>几何数据 ▸ 操作 ▸</span> 变换几何体</li>
        <li><span>实用工具 ▸</span> 重复区</li>
        <li><span>几何数据 ▸</span> 合并几何</li>
        <li><span>材质 ▸</span> 设置材质</li>
        <li><span>输入 ▸ 常量 ▸</span> 材质</li>
        <li><span>实例 ▸</span> 缩放实例</li>
      </ul>
      <div class="moredown"></div>
    </div>
    <div class="hscroll"></div>
    <div class="vscroll"></div>
  </div>

  <div class="area assets">
    <div class="hrow">
      <button class="b dark ed"><svg class="i"><use href="#assets"/></svg><svg class="c"><use href="#chev"/></svg></button>
      <div class="menu"><button>视图</button><button>选择</button><button>目录</button><button class="helper">资产助手</button><button>资产</button></div>
      <label class="dd follow"><select aria-label="导入方式"><option>遵循偏好设置</option></select><svg class="c"><use href="#chev"/></svg></label>
      <div class="end">
        <button class="b dark ed"><svg class="i"><use href="#display"/></svg><svg class="c"><use href="#chev"/></svg></button>
        <label class="find afind"><svg class="i"><use href="#search"/></svg><input placeholder="搜索" aria-label="搜索"></label>
        <button class="b dark ed"><svg class="i"><use href="#funnel-o"/></svg><svg class="c"><use href="#chev"/></svg></button>
        <button class="b lit"><svg class="i"><use href="#gear"/></svg></button>
      </div>
    </div>
    <div class="arow">
      <div class="lib"><label class="dd"><select aria-label="资产库"><option>Blender Asset</option></select><svg class="c"><use href="#chev"/></svg></label><button class="b grey"><svg class="i"><use href="#refresh"/></svg></button></div>
      <div class="msg"><div>资产库路径不存在:</div><div class="path">（融盘素材\Blender Asset）</div></div>
    </div>
  </div>
</section>

<section class="col side">
  <div class="area outliner">
    <div class="hrow">
      <button class="b ed"><svg class="i"><use href="#outliner"/></svg><svg class="c"><use href="#chev"/></svg></button>
      <button class="b dark ed"><svg class="i"><use href="#images"/></svg><svg class="c"><use href="#chev"/></svg></button>
      <label class="find ofind"><svg class="i"><use href="#search"/></svg><input placeholder="搜索" aria-label="搜索"></label>
      <div class="end"><button class="b dark ed"><svg class="i"><use href="#funnel-o"/></svg><svg class="c"><use href="#chev"/></svg></button><button class="b grey"><svg class="i"><use href="#newcol"/></svg></button></div>
    </div>
    <ul class="tree-list">
      <li><svg class="i"><use href="#box"/></svg><span>场景集合</span></li>
      <li><svg class="i tw"><use href="#chev-d"/></svg><svg class="i hl"><use href="#box"/></svg><span>Collection</span><div class="flags"><input type="checkbox" checked aria-label="启用"><svg class="i"><use href="#eye"/></svg><svg class="i"><use href="#photo"/></svg></div></li>
      <li class="sub"><svg class="i tw"><use href="#chev-r"/></svg><svg class="i org"><use href="#cam"/></svg><span>Camera</span><svg class="i grn hl data1"><use href="#cam-d"/></svg><div class="flags"><svg class="i"><use href="#eye"/></svg><svg class="i"><use href="#photo"/></svg></div></li>
      <li class="sub sel"><svg class="i tw"><use href="#chev-r"/></svg><svg class="i org hl"><use href="#tri"/></svg><span>Cube</span><svg class="i blu data1"><use href="#wrench"/></svg><svg class="i cyn"><use href="#mesh"/></svg><div class="flags"><svg class="i"><use href="#eye"/></svg><svg class="i"><use href="#photo"/></svg></div></li>
      <li class="sub"><svg class="i tw"><use href="#chev-r"/></svg><svg class="i org"><use href="#bulb"/></svg><span>Light</span><svg class="i grn data1"><use href="#sun"/></svg><div class="flags"><svg class="i"><use href="#eye"/></svg><svg class="i"><use href="#photo"/></svg></div></li>
    </ul>
  </div>

  <div class="area props">
    <div class="hrow">
      <button class="b ed"><svg class="i"><use href="#props"/></svg><svg class="c"><use href="#chev"/></svg></button>
      <label class="find pfind"><svg class="i"><use href="#search"/></svg><input placeholder="搜索" aria-label="搜索"></label>
      <div class="end"><button class="b"><svg class="i"><use href="#chev"/></svg></button></div>
    </div>
    <div class="pbody">
      <div class="ptabs">
        <button class="on"><svg class="i"><use href="#tool"/></svg></button>
        <button class="gap"><svg class="i"><use href="#render"/></svg></button><button><svg class="i"><use href="#printer"/></svg></button><button><svg class="i"><use href="#images"/></svg></button><button><svg class="i"><use href="#scene"/></svg></button><button class="red"><svg class="i"><use href="#world"/></svg></button>
        <button class="gap"><svg class="i"><use href="#box-o"/></svg></button>
        <button class="gap orange"><svg class="i"><use href="#object"/></svg></button><button class="blu"><svg class="i"><use href="#wrench"/></svg></button><button class="blu"><svg class="i"><use href="#particles"/></svg></button><button class="blu"><svg class="i"><use href="#physics"/></svg></button><button class="blu"><svg class="i"><use href="#constraint"/></svg></button><button class="grn"><svg class="i"><use href="#mesh"/></svg></button><button class="pink"><svg class="i"><use href="#material"/></svg></button>
        <button class="gap pink"><svg class="i"><use href="#checker"/></svg></button>
      </div>
      <div class="pmain">
        <div class="ptitle"><svg class="big"><use href="#transform"/></svg>变换</div>
        <div class="plabel">操控器:</div>
        <label class="prow"><span class="w1">坐标系</span><span class="dd"><svg class="i"><use href="#axes-s"/></svg><select><option>默认</option></select><svg class="c"><use href="#chev"/></svg></span></label>
        <label class="prow"><span class="w2">拖动:</span><span class="dd"><select><option>框选</option></select><svg class="c"><use href="#chev"/></svg></span></label>
        <div class="panel">
          <div class="phead"><svg class="i"><use href="#chev-d"/></svg>选项<span class="grip"></span></div>
          <div class="phead inner"><svg class="i"><use href="#chev-d"/></svg>变换</div>
          <fieldset class="checks"><legend>仅影响</legend><div><label><input type="checkbox">原点</label><label><input type="checkbox">位置</label><label><input type="checkbox">父级</label></div></fieldset>
        </div>
        <div class="panel"><div class="phead"><svg class="i"><use href="#chev-r"/></svg>工作区<span class="grip"></span></div></div>
      </div>
    </div>
  </div>
</section>
</main>

<footer class="status">
  <span class="s1"><svg class="i"><use href="#mouse-l"/></svg>选择</span>
  <span class="s2"><svg class="i"><use href="#mouse-m"/></svg>平移视图</span>
  <span class="s3"><svg class="i"><use href="#mouse-r"/></svg>节点</span>
  <span class="ver">4.1.0</span>
</footer>

<div class="watermark"><svg viewBox="0 0 54 54"><path fill-rule="evenodd" d="M8 0h38a8 8 0 0 1 8 8v38a8 8 0 0 1-8 8H8a8 8 0 0 1-8-8V8a8 8 0 0 1 8-8zM14 12v32l8-6 20-11-20-13z" fill="currentColor"/><circle cx="18" cy="40" r="9" fill="none" stroke="currentColor" stroke-width="4"/></svg><span>tafe.cc</span></div>
</body>
</html>
```
FILE: styles.css
```css
* { box-sizing: border-box; }
body {
  margin: 0; height: 100vh; display: flex; flex-direction: column; overflow: hidden;
  background: #000; color: #d6d6d6; padding-bottom: 4px; position: relative;
  font: 11px/16px Inter, "Noto Sans CJK SC", sans-serif;
}
button, input, select { font: inherit; color: inherit; background: none; border: 0; padding: 0; margin: 0; border-radius: 0; min-width: 0; }
button { white-space: nowrap; }
select { appearance: none; flex: 1; outline: 0; }
ul { list-style: none; margin: 0; padding: 0; }
h1, h2 { margin: 0; font: inherit; }
.sprite { position: absolute; width: 0; height: 0; }
.i { width: 16px; height: 16px; flex: none; display: block; }
.c { width: 12px; height: 12px; flex: none; display: block; }
.flip { transform: scaleX(-1); }
.white { color: #eee; }

/* title bar and top bar */
.titlebar { height: 24px; flex: none; background: #fff; color: #111; display: flex; align-items: center; padding: 0 0 2px 3px; border-bottom: 1px solid #8c8c8c; }
.titlebar h1 { font: 12px/16px "Open Sans", "Noto Sans CJK SC", sans-serif; margin-left: 6px; white-space: nowrap; }
.logo { color: #d9772b; }
.winbtns { margin-left: auto; display: flex; gap: 29px; padding-right: 17px; }
.topbar { height: 28px; flex: none; background: #181818; display: flex; align-items: center; padding: 0 8px 2px 9px; }
.topbar .menu { margin-left: 10px; }
.menu { display: flex; gap: 15px; }
.menu button { display: flex; align-items: center; }
.tabs { display: flex; gap: 1px; margin-left: 25px; align-self: flex-end; margin-bottom: -2px; color: #989898; }
.tabs button { height: 22px; padding: 0 10px 2px; }
.tabs .on { background: #303030; color: #e6e6e6; border-radius: 4px 4px 0 0; }
.tabs .add { padding: 0 8px 2px; font-size: 16px; line-height: 20px; }
.idblock { display: flex; align-items: center; height: 19px; width: 191px; background: #1d1d1d; border: 1px solid #2a2a2a; border-radius: 4px; }
.topbar .tabs + .idblock { margin-left: auto; }
.layer { margin-left: 6px; }
.idblock input { flex: 1; padding-left: 7px; }
.pick { display: flex; align-items: center; width: 31px; padding-left: 3px; background: #282828; height: 17px; }
.ghost { color: #666; width: 20px; padding-left: 2px; }

/* shared controls */
.b { height: 19px; min-width: 19px; display: flex; align-items: center; justify-content: center; border-radius: 2px; }
.grey { background: #4a4a4a; color: #c8c8c8; }
.dark { background: #262626; }
.join .dark { min-width: 16px; }
.blue { background: #4772b3; color: #fff; }
.dim { color: #858585; }
.ed { width: 29px; }
.lit { background: #777; color: #fff; border-radius: 4px; }
.off { color: #777; justify-content: flex-start; }
.join { display: flex; }
.dd { display: flex; align-items: center; height: 19px; background: #262626; border-radius: 3px; padding: 0 2px 0 3px; }
.dd .i + select { padding-left: 6px; }
.find { display: flex; align-items: center; height: 19px; background: #1d1d1d; border-radius: 3px; padding-left: 5px; }
.find input { flex: 1; padding-left: 5px; }
.find input::placeholder { color: #555; opacity: 1; }
.hrow { height: 24px; display: flex; align-items: center; flex: none; background: #303030; position: relative; }
.end { margin-left: auto; display: flex; align-items: center; gap: 9px; }
.grip { width: 12px; height: 4px; margin-left: auto; border-top: 1px dotted #777; border-bottom: 1px dotted #777; }

.workspace { flex: 1; min-height: 0; display: grid; grid-template-columns: 1290fr 955fr 309fr; column-gap: 3px; background: #181818; }
.col { display: flex; flex-direction: column; gap: 3px; min-width: 0; min-height: 0; }
.area { position: relative; overflow: hidden; border-radius: 5px; }

/* 3D viewport */
.viewport { flex: 1; background: #3d3d3d; }
.scene3d { position: absolute; left: 0; top: 0; width: 100%; height: 100%; }
.viewport .hrow { padding: 0 10px 0 11px; }
.viewport .solid { background: #323232; }
.mode { width: 106px; margin: 0 13px 0 9px; }
.mid { display: flex; margin-left: 167px; gap: 9px; }
.wide { width: 30px; margin-right: 14px; background: #545454; }
.orient { width: 75px; }
.viewport .tools { height: 28px; background: rgba(56, 56, 56, .8); padding: 0 4px 0 9px; gap: 11px; }
.pair { display: flex; align-items: center; gap: 7px; }
.dflt { width: 96px; padding-left: 4px; }
.drag { width: 48px; padding-left: 6px; }
.pair + .pair { gap: 11px; }
.filters { display: flex; align-items: center; margin-left: 147px; background: #333; border-radius: 3px; padding-right: 3px; }
.filters .join { margin: 0 5px; }
.vfind { width: 221px; }
.opts { margin-left: auto; width: 46px; gap: 4px; }
.toolbar { position: absolute; left: 9px; top: 61px; display: flex; flex-direction: column; gap: 7px; }
.tgroup { border-radius: 3px; overflow: hidden; background: #282828; }
.tgroup button { width: 38px; height: 35px; display: flex; align-items: center; justify-content: center; position: relative; color: #eee; }
.tgroup svg { width: 24px; height: 24px; }
.tgroup .on { background: #4772b3; }
.more::after { content: ""; position: absolute; right: 2px; bottom: 2px; border: 2px solid #999; border-left-color: transparent; border-top-color: transparent; }
.vinfo { position: absolute; left: 65px; top: 59px; line-height: 18px; font-weight: 500; color: #fff; text-shadow: 0 1px 2px #000; }
.orbit { position: absolute; right: 5px; top: 63px; width: 90px; height: 80px; }
.orbit text { font: 600 11px Inter, sans-serif; text-anchor: middle; fill: #111; }
.navbtns { position: absolute; right: 7px; top: 145px; display: flex; flex-direction: column; gap: 3px; }
.navbtns button { width: 28px; height: 28px; border-radius: 50%; background: #2b2b2b; display: flex; align-items: center; justify-content: center; }
.navbtns .sep { margin-top: 36px; }
.flap { position: absolute; right: 0; top: 64px; font-size: 16px; line-height: 20px; color: #999; }
.nodes .flap { top: 37px; }
.keys { position: absolute; left: 91px; bottom: 91px; width: 118px; color: #fff; font-size: 22px; line-height: 28px; }
.keys svg { display: block; width: 46px; height: 62px; margin: 7px 0 9px; }
.keys hr { border: 0; height: 2px; background: #fff; margin: 0 0 7px; }

/* timeline */
.timeline { height: 51px; background: #1d1d1d; }
.timeline .hrow { height: 27px; padding: 0 7px 3px 10px; }
.timeline .hrow > .b { margin-top: 2px; }
.tl { margin: 2px 0 0 13px; gap: 14px; }
.tl .c { margin-left: 4px; }
.tl button:first-child { margin-right: -7px; }
.tl button:nth-child(2) { margin-right: -3px; }
.play { display: flex; gap: 27px; position: absolute; left: 553px; top: 4px; }
.play .join .b { width: 20px; }
.frames { margin-left: auto; margin-top: 2px; display: flex; }
.frames input { text-align: right; flex: 1; }
.frames .cur { flex: none; width: 72px; height: 19px; text-align: center; background: #545454; border-radius: 3px; margin-right: 7px; }
.frames label { width: 86px; height: 19px; background: #545454; display: flex; align-items: center; padding: 0 14px; border-left: 1px solid #444; }
.frames .b { width: 21px; background: #545454; }
.trow { display: flex; height: 24px; }
.chan { width: 220px; background: #282828; display: flex; align-items: center; padding-left: 7px; flex: none; }
.chan .b { margin-left: auto; margin-right: 24px; }
.ruler { flex: 1; position: relative; background: #1b1b1b; }
.ticks { display: flex; padding: 3px 41px 0 41px; color: #aaa; }
.ticks span { flex: 1; text-align: center; }
.scroll { position: absolute; left: 10px; right: 18px; top: 14px; height: 9px; border-radius: 4px; background: #545454; }
.head { position: absolute; left: 1px; top: 1px; width: 23px; height: 14px; line-height: 14px; border-radius: 3px 3px 0 0; background: #4772b3; color: #fff; text-align: center; }
.action { width: 204px; margin: 1px 6px 0 0; background: #383838; border-radius: 3px; display: flex; align-items: center; padding: 1px 4px 0; gap: 3px; flex: none; }
.action .val { margin-left: auto; }
.action .grip { margin-left: 0; }

/* node editor */
.nodes { flex: 1; background: #1d1d1d; }
.nodes .hrow { background: #272727; padding: 0 10px 0 9px; }
.mod { width: 65px; margin: 0 12px 0 10px; padding-left: 5px; }
.tree { display: flex; margin-left: 93px; }
.tree input { width: 121px; background: #181818; padding-left: 8px; }
.tree .ghost { margin-left: 7px; color: #888; }
.crumbs { display: flex; align-items: center; height: 30px; margin-top: 8px; padding-left: 18px; }
.crumbs span { margin-left: 8px; }
.crumbs .sepc { margin: 0 4px 0 11px; }
.links { position: absolute; left: 0; top: 0; width: 100%; height: 100%; }
.node { position: absolute; width: 171px; border-radius: 5px; background: #303030; padding: 0 12px; box-shadow: 0 2px 7px #000a; font-size: 13px; line-height: 20px; color: #e0e0e0; }
.node h2 { height: 25px; margin: 0 -12px; padding: 0 0 2px 12px; display: flex; align-items: center; gap: 4px; background: #1f735d; border-radius: 5px 5px 0 0; }
.node h2 .i { width: 14px; height: 14px; }
.io h2 { height: 27px; background: #1b1b1b; }
.row { height: 28px; display: flex; align-items: center; position: relative; padding-bottom: 2px; }
.out { justify-content: flex-end; }
.io .out, .io h2 + .row { height: 36px; }
.io .row + .row { height: 20px; }
.top { height: 38px; }
.line .top { margin-bottom: 3px; }
.vec { height: 29px; }
.sock { position: absolute; left: -17px; top: 50%; width: 10px; height: 10px; margin-top: -5px; border-radius: 50%; z-index: 1; }
.r { left: auto; right: -17px; }
.geo { background: #00d6a3; }
.hollow { border: 2px solid #777; background: #1d1d1d; width: 12px; height: 12px; margin: -7px -1px 0; }
.int { background: #598c5c; }
.vecs { background: #6363c7; }
.bool { background: #cca6d6; }
.nums { display: flex; flex-direction: column; gap: 1px; border-radius: 3px; overflow: hidden; background: #3c3c3c; }
.num { height: 24px; display: flex; align-items: center; background: #545454; padding: 0 18px 2px 20px; position: relative; }
.num span { flex: none; }
.num input { flex: 1; width: 20px; text-align: right; }
.one { border-radius: 3px; }
.toggle { display: flex; height: 24px; }
.toggle button { flex: 1; background: #545454; border-radius: 0 3px 3px 0; padding-bottom: 2px; }
.toggle .on { background: #4772b3; border-radius: 3px 0 0 3px; }
.node input[type=checkbox] { appearance: none; width: 17px; height: 17px; background: #545454; border-radius: 3px; margin-right: 4px; }
.gin { left: -90px; top: 329px; height: 91px; }
.bez { left: 157px; top: 304px; padding-bottom: 5px; }
.c2m { left: 429px; top: 304px; height: 148px; }
.c2m .top { height: 36px; }
.gout { left: 698px; top: 329px; height: 91px; }
.line { left: 47px; top: 822px; padding-bottom: 8px; }

.popup { position: absolute; left: 338px; top: 855px; width: 484px; height: 256px; padding: 5px 2px 0; background: #181818; box-shadow: 0 0 4px #000a; border-radius: 3px; }
.ibeam { position: absolute; left: -10px; top: 6px; width: 8px; height: 18px; }
.psearch { display: flex; align-items: center; height: 20px; border: 1px solid #333; padding-left: 7px; }
.psearch input { margin-left: 6px; width: 27px; height: 18px; color: #fff; border-right: 2px solid #4772d3; text-decoration: underline 2px; text-underline-offset: 2px; }
.popup ul { display: flex; flex-direction: column; height: 205px; margin-top: 17px; }
.popup li { flex: 1; display: flex; align-items: center; gap: 2px; padding-left: 4px; color: #e6e6e6; white-space: nowrap; }
.popup li span { color: #777; }
.popup .on { background: #404040; }
.moredown { width: 0; margin: 0 auto; border: 4px solid transparent; border-top: 6px solid #ddd; border-bottom: 0; }
.hscroll { position: absolute; left: 96px; right: 11px; bottom: 2px; height: 4px; border-radius: 2px; background: #2b2b2b; }
.vscroll { position: absolute; right: 3px; top: 60px; bottom: 12px; width: 3px; border-radius: 2px; background: #2b2b2b; }

/* asset browser */
.assets { height: 51px; background: #282828; }
.assets .hrow { height: 28px; padding: 0 8px 0 9px; }
.assets .menu { margin-left: 14px; }
.helper { margin-left: 6px; }
.follow { width: 106px; margin-left: 164px; padding-left: 7px; }
.assets .end { gap: 8px; }
.afind { width: 157px; }
.arow { display: flex; height: 34px; }
.lib { width: 233px; display: flex; align-items: center; padding: 0 3px 2px 10px; gap: 1px; flex: none; }
.lib .dd { flex: 1; height: 20px; }
.msg { padding-left: 10px; line-height: 14px; margin-top: -1px; }
.msg .path { margin: 6px 0 0 5px; }

/* outliner */
.outliner { height: 437px; background: #282828; flex: none; }
.outliner .hrow { padding: 0 8px 0 9px; gap: 8px; background: #2b2b2b; }
.ofind { width: 114px; margin-left: 9px; }
.pfind { width: 114px; margin-left: 59px; }
.tree-list { display: flex; flex-direction: column; height: 102px; margin-top: 3px; }
.tree-list li { flex: 1; display: flex; align-items: center; padding: 0 12px 0 21px; gap: 4px; white-space: nowrap; }
.tree-list li span { margin-left: 3px; }
.tree-list .sub { padding-left: 41px; }
.tree-list .sel { background: #334d80; }
.sel span { color: #f0b070; }
.tw { color: #aaa; }
.hl { background: #ffffff2e; border-radius: 3px; padding: 1px; }
.org { color: #e19658; }
.orange { color: #e08a3c; }
.grn { color: #1fb584; }
.cyn { color: #24c4c4; }
.blu { color: #6e86d6; }
.pink { color: #c9586c; }
.red { color: #a84860; }
.tree-list .data1 { margin-left: 17px; }
.flags { margin-left: auto; display: flex; align-items: center; gap: 4px; color: #e0e0e0; }
.flags input { accent-color: #e0e0e0; width: 12px; height: 12px; margin-right: 2px; }

/* properties */
.props { flex: 1; background: #303030; display: flex; flex-direction: column; }
.props .hrow { padding: 0 8px 0 9px; }
.pbody { flex: 1; display: flex; }
.ptabs { width: 28px; background: #1d1d1d; padding-top: 8px; display: flex; flex-direction: column; color: #c0c0c0; }
.ptabs button { width: 28px; height: 29px; display: flex; align-items: center; justify-content: center; }
.ptabs .on { background: #303030; color: #eee; border-radius: 4px 0 0 4px; }
.ptabs .gap { margin-top: 7px; }
.ptabs .grn { color: #00c080; }
.ptabs .orange { color: #e08a3c; }
.ptabs .blu { color: #6e86d6; }
.ptabs .pink { color: #c9586c; }
.ptabs .red { color: #a84860; }
.pmain { flex: 1; padding: 7px 8px 0 7px; }
.ptitle { display: flex; align-items: center; gap: 9px; height: 26px; padding-left: 7px; }
.big { width: 22px; height: 22px; }
.plabel { height: 30px; line-height: 36px; padding-left: 1px; }
.prow { display: flex; align-items: center; gap: 11px; height: 20px; margin-bottom: 3px; }
.prow .dd { flex: 1; padding: 0 1px 0 4px; }
.prow span:first-child { text-align: right; flex: none; }
.w1 { width: 102px; }
.w2 { width: 84px; }
.panel { background: #353535; border-radius: 3px; margin-bottom: 4px; overflow: hidden; }
.prow + .panel { margin-top: 10px; height: 132px; }
.phead { height: 26px; display: flex; align-items: center; gap: 3px; padding: 0 6px 0 5px; background: #3b3b3b; }
.phead .i { width: 14px; height: 14px; color: #aaa; }
.inner { padding-left: 19px; }
.checks { display: flex; border: 0; margin: 0; padding: 7px 0 0 70px; }
.checks legend { float: left; width: 43px; padding: 0; line-height: 20px; }
.checks label { display: flex; align-items: center; height: 20px; margin-bottom: 1px; gap: 4px; }
.checks input { appearance: none; width: 12px; height: 12px; background: #545454; border-radius: 2px; }

.status { height: 22px; flex: none; background: #181818; color: #a0a0a0; display: flex; align-items: center; padding: 0 12px 0 9px; }
.status span { display: flex; align-items: center; gap: 9px; }
.s1, .s2 { width: 211px; }
.ver { margin-left: auto; }
.watermark { position: absolute; left: 10px; bottom: 10px; display: flex; align-items: center; gap: 11px; color: #fff; opacity: .32; pointer-events: none; font: 700 48px/52px "Open Sans", sans-serif; }
.watermark svg { width: 54px; height: 54px; }
```
